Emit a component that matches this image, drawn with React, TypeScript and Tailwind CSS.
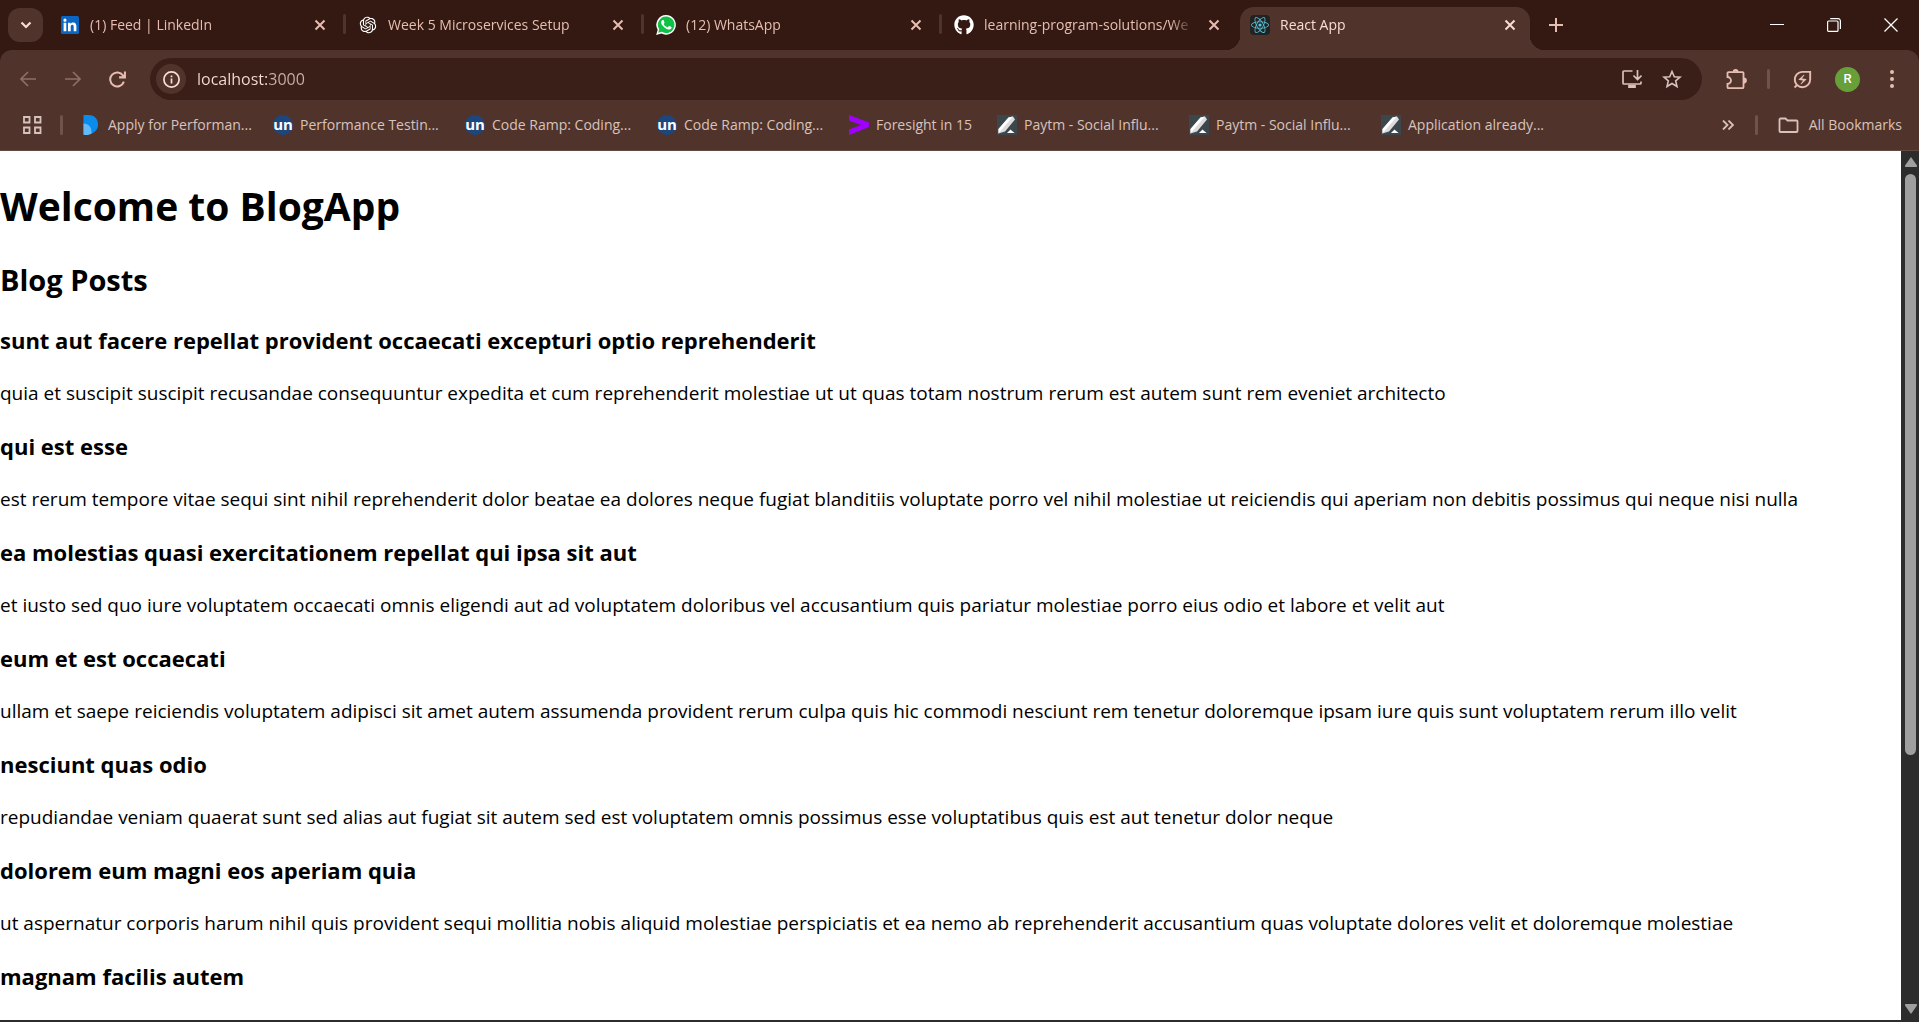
import type { ReactNode } from "react";
import { FaGithub, FaReact } from "react-icons/fa";
import { RiOpenaiFill } from "react-icons/ri";
import { MdOutlineEnergySavingsLeaf } from "react-icons/md";

const CHROME_FONT = "font-['Segoe_UI','Open_Sans',sans-serif]";

function CloseGlyph() {
  return (
    <svg viewBox="0 0 12 12" className="size-3" fill="none" stroke="currentColor" strokeWidth="2">
      <path d="M1.5 1.5l9 9M10.5 1.5l-9 9" />
    </svg>
  );
}

function LinkedInIcon() {
  return (
    <svg viewBox="0 0 18 18" className="size-[18px]">
      <rect width="18" height="18" rx="1.5" fill="#0a66c2" />
      <path
        fill="#fff"
        d="M2.6 6.8h2.7v8.5H2.6zM3.95 2.6a1.55 1.55 0 1 1 0 3.1 1.55 1.55 0 0 1 0-3.1zM7 6.8h2.5V8c.4-.8 1.3-1.5 2.6-1.5 2.7 0 3.3 1.7 3.3 4.1v4.7h-2.7v-4.2c0-1 0-2.3-1.4-2.3s-1.6 1.1-1.6 2.2v4.3H7z"
      />
    </svg>
  );
}

function WhatsAppIcon() {
  return (
    <svg viewBox="0 0 24 24" className="size-5">
      <path fill="#fff" d="M12.2 0A11.8 11.8 0 0 0 2 17.8L.2 24l6.4-1.7A11.8 11.8 0 1 0 12.2 0z" />
      <path fill="#0fc144" d="M12.2 1.9a9.9 9.9 0 0 0-8.4 15.2l-1.1 4.2 4.3-1.1A9.9 9.9 0 1 0 12.2 1.9z" />
      <path
        fill="#fff"
        d="M9.3 6.6c-.2-.5-.4-.5-.7-.5H8c-.2 0-.5.1-.8.4-.3.3-1 1-1 2.5s1.1 2.9 1.2 3.1c.2.2 2.1 3.4 5.2 4.6 2.6 1 3.1.8 3.7.8.6-.1 1.8-.7 2.1-1.5.3-.7.3-1.3.2-1.5-.1-.1-.3-.2-.6-.3l-2.100-1c-.3-.1-.5-.2-.7.2l-1 1.200c-.2.2-.4.2-.7.100-.3-.2-1.300-.5-2.500-1.500-.9-.8-1.500-1.800-1.700-2.100-.2-.3 0-.5.1-.6l.5-.6.3-.5v-.5z"
      />
    </svg>
  );
}

function ReactIcon() {
  return (
    <span className="flex size-5 items-center justify-center rounded-sm bg-[#222]">
      <FaReact className="size-[18px] text-[#58c4dc]" />
    </span>
  );
}

type TabInfo = { title: string; icon: ReactNode; active?: boolean; separator?: boolean };

const tabs: TabInfo[] = [
  { title: "(1) Feed | LinkedIn", icon: <LinkedInIcon />, separator: true },
  { title: "Week 5 Microservices Setup", icon: <RiOpenaiFill className="size-5 text-white" />, separator: true },
  { title: "(12) WhatsApp", icon: <WhatsAppIcon />, separator: true },
  { title: "learning-program-solutions/We", icon: <FaGithub className="size-5 text-white" /> },
  { title: "React App", icon: <ReactIcon />, active: true },
];

function Tab({ tab }: { tab: TabInfo }) {
  return (
    <div
      className={
        tab.active
          ? "relative flex h-[43px] min-w-0 max-w-[290px] flex-1 items-center self-end rounded-t-[14px] bg-[#50342c] pr-3.5 pb-[7px] pl-2.5 text-[#f8ddd5]"
          : "relative flex h-[43px] min-w-0 max-w-[298px] flex-1 items-center self-end pr-5 pb-[7px] pl-3 text-[#e7bdb1]"
      }
    >
      {tab.active && (
        <>
          <span className="absolute bottom-0 -left-3.5 size-3.5 bg-[radial-gradient(circle_at_0_0,transparent_14px,#50342c_14px)]" />
          <span className="absolute -right-3.5 bottom-0 size-3.5 bg-[radial-gradient(circle_at_100%_0,transparent_14px,#50342c_14px)]" />
        </>
      )}
      <span className="flex w-5 shrink-0 justify-center">{tab.icon}</span>
      <span className="ml-2.5 min-w-0 flex-1 overflow-hidden text-sm whitespace-nowrap [mask-image:linear-gradient(to_right,black_calc(100%-24px),transparent)]">
        {tab.title}
      </span>
      <button aria-label={`Close ${tab.title}`} className="ml-3.5 shrink-0">
        <CloseGlyph />
      </button>
      {tab.separator && <span className="absolute top-[7px] right-0 h-5 w-[3px] rounded-full bg-[#50342c]" />}
    </div>
  );
}

function TabStrip() {
  return (
    <div className="flex h-[50px] shrink-0 items-center bg-[#331912] text-[#e7bdb1]">
      <button
        aria-label="Search tabs"
        className="ml-2 flex h-[34px] w-[35px] shrink-0 items-center justify-center rounded-xl bg-[#50342c] text-[#f8ddd5]"
      >
        <svg viewBox="0 0 12 12" className="size-3" fill="none" stroke="currentColor" strokeWidth="2.2">
          <path d="M1.5 3.5L6 8l4.500-4.500" />
        </svg>
      </button>
      <div className="ml-[5px] flex min-w-0 flex-1 self-stretch">
        {tabs.map((tab) => (
          <Tab key={tab.title} tab={tab} />
        ))}
        <button aria-label="New tab" className="ml-[19px] shrink-0">
          <svg viewBox="0 0 14 14" className="size-3.5" fill="none" stroke="currentColor" strokeWidth="2">
            <path d="M7 0v14M0 7h14" />
          </svg>
        </button>
      </div>
      <div className="mr-[21px] flex shrink-0 items-center gap-[43px] text-white">
        <button aria-label="Minimize">
          <svg viewBox="0 0 14 14" className="size-3.5" stroke="currentColor">
            <path d="M0 6.500h14" />
          </svg>
        </button>
        <button aria-label="Restore">
          <svg viewBox="0 0 14 14" className="size-3.5" fill="none" stroke="currentColor" strokeWidth="1.200">
            <rect x=".6" y="3" width="10.400" height="10.400" rx="1" />
            <path d="M3.200 .7h8a2.200 2.200 0 0 1 2.200 2.200v8" />
          </svg>
        </button>
        <button aria-label="Close window">
          <svg viewBox="0 0 14 14" className="size-3.5" fill="none" stroke="currentColor" strokeWidth="1.300">
            <path d="M.5.5l13 13M13.500.5l-13 13" />
          </svg>
        </button>
      </div>
    </div>
  );
}

function Toolbar() {
  return (
    <div className="flex h-[58px] items-center text-[#e7bdb1]">
      <button aria-label="Back" className="ml-5 text-[#8e6d64]">
        <svg viewBox="0 0 16 16" className="size-4" fill="none" stroke="currentColor" strokeWidth="1.700">
          <path d="M16 8H1.500M8 1L1 8l7 7" />
        </svg>
      </button>
      <button aria-label="Forward" className="ml-[29px] text-[#8e6d64]">
        <svg viewBox="0 0 16 16" className="size-4" fill="none" stroke="currentColor" strokeWidth="1.700">
          <path d="M0 8h14.500M8 1l7 7-7 7" />
        </svg>
      </button>
      <button aria-label="Reload" className="ml-7">
        <svg viewBox="0 0 16 16" className="size-[17px]" fill="none" stroke="currentColor" strokeWidth="1.900">
          <path d="M14 10A6.600 6.600 0 1 1 13.200 4.200L14.800 6M15 .5V6H9.500" />
        </svg>
      </button>
      <div className="ml-6 flex h-[42px] min-w-0 flex-1 items-center rounded-full bg-[#3a1f19] pr-5 pl-1.5">
        <button
          aria-label="View site information"
          className="flex size-[30px] shrink-0 items-center justify-center rounded-full bg-[#50342c] text-[#f8ddd5]"
        >
          <svg viewBox="0 0 17 17" className="size-[17px]" fill="none" stroke="currentColor" strokeWidth="1.700">
            <circle cx="8.500" cy="8.500" r="7.600" />
            <path d="M8.500 7.500v5M8.500 4.400v1.800" />
          </svg>
        </button>
        <input
          aria-label="Address"
          defaultValue="localhost:3000"
          className="ml-[11px] min-w-0 flex-1 bg-transparent bg-linear-to-r from-[#f8ddd5] from-[71px] to-[#cdb0a8] to-[71px] bg-clip-text text-base text-transparent outline-none"
        />
        <button aria-label="Install app" className="text-[#d8c2bc]">
          <svg viewBox="0 0 20 18" className="h-[18px] w-5" fill="none" stroke="currentColor" strokeWidth="1.700">
            <path d="M10.500 1H2a1 1 0 0 0-1 1v11a1 1 0 0 0 1 1h16a1 1 0 0 0 1-1v-1.500M15.500 0v9M11.500 5.500l4 4 4-4" />
            <path d="M7 15.500v2h6v-2z" fill="currentColor" />
          </svg>
        </button>
        <button aria-label="Bookmark this tab" className="ml-5 text-[#d8c2bc]">
          <svg viewBox="0 0 20 20" className="size-5" fill="none" stroke="currentColor" strokeWidth="1.600">
            <path d="M10 2.500l2.300 5.200 5.700.5-4.300 3.700 1.300 5.600-5-3-5 3 1.300-5.600L2 8.200l5.700-.5z" />
          </svg>
        </button>
      </div>
      <button aria-label="Extensions" className="ml-6">
        <svg viewBox="0 0 21 21" className="size-[21px]" fill="none" stroke="currentColor" strokeWidth="1.800">
          <path d="M2.500 3.200h14a1 1 0 0 1 1 1v14a1 1 0 0 1-1 1h-14a1 1 0 0 1-1-1V15a3.400 3.400 0 0 0 0-7V4.200a1 1 0 0 1 1-1z" />
          <path d="M7.600 2.600a2 2 0 0 1 4 0zM18 9.500a2 2 0 0 1 0 4z" fill="currentColor" stroke="none" />
          <path d="M7.600 3a2 2 0 0 1 4 0M17.800 9.300a2.200 2.200 0 0 1 0 4.400" />
        </svg>
      </button>
      <span className="ml-5 h-5 w-[3px] rounded-full bg-[#72534a]" />
      <button aria-label="Energy saver" className="ml-[21px]">
        <MdOutlineEnergySavingsLeaf className="size-[23px]" />
      </button>
      <button
        aria-label="Profile"
        className="ml-[21px] flex size-[25px] items-center justify-center rounded-full bg-[#689f38] font-[Roboto,sans-serif] text-[13px] font-medium text-white"
      >
        R
      </button>
      <button aria-label="Menu" className="mr-[25px] ml-[30px]">
        <svg viewBox="0 0 4 18" className="h-[18px] w-1" fill="currentColor">
          <circle cx="2" cy="2" r="2" />
          <circle cx="2" cy="9" r="2" />
          <circle cx="2" cy="16" r="2" />
        </svg>
      </button>
    </div>
  );
}

function DropIcon() {
  return (
    <svg viewBox="0 0 20 20" className="size-5">
      <path d="M2.500 0h5C13.500 0 17 4 17 9.500c0 4-2.500 7.500-6 9L2.500 20z" fill="#0a8cec" />
      <path d="M2.500 8.500c5 0 8.500 4 8 10.200L7 20H3.500a1 1 0 0 1-1-1z" fill="#63baf8" />
    </svg>
  );
}

function UnIcon() {
  return (
    <span className="flex size-5 items-center justify-center rounded-full bg-[#1c4680] pb-0.5 text-[15px] leading-none font-bold text-white">
      un
    </span>
  );
}

function ChevronLogo() {
  return (
    <svg viewBox="0 0 20 20" className="size-5" fill="#a100ff">
      <path d="M0 0l20 7.500v4.500L0 20v-5.500L12 10 0 5.500z" />
    </svg>
  );
}

function PenIcon() {
  return (
    <svg viewBox="0 0 20 20" className="size-5">
      <rect width="20" height="20" fill="#3c474c" />
      <path d="M11.500 2.500L16 1.500l2 3L8 16.500l-6.500 2V14z" fill="#dcdcdc" />
      <path d="M11.500 2.500L16 1.500 4 15.500l-2.500 3V14z" fill="#fff" />
      <path d="M10 18l3.500-3.500L17.500 18z" fill="#fff" />
    </svg>
  );
}

const bookmarks: { title: string; icon: ReactNode; short?: boolean }[] = [
  { title: "Apply for Performan...", icon: <DropIcon /> },
  { title: "Performance Testin...", icon: <UnIcon /> },
  { title: "Code Ramp: Coding...", icon: <UnIcon /> },
  { title: "Code Ramp: Coding...", icon: <UnIcon /> },
  { title: "Foresight in 15", icon: <ChevronLogo />, short: true },
  { title: "Paytm - Social Influ...", icon: <PenIcon /> },
  { title: "Paytm - Social Influ...", icon: <PenIcon /> },
  { title: "Application already...", icon: <PenIcon /> },
];

function BookmarksBar() {
  return (
    <nav className="flex h-[42px] items-start pt-[7px] text-sm leading-5 text-[#d8c2bc]">
      <button aria-label="Apps" className="ml-[23px] shrink-0 pt-px">
        <svg viewBox="0 0 19 18" className="h-[18px] w-[19px]" fill="none" stroke="currentColor" strokeWidth="1.800">
          <path d="M1 1h5.500v5.500H1zM12 1h5.500v5.500H12zM1 11.500h5.500V17H1zM12 11.500h5.500V17H12z" />
        </svg>
      </button>
      <span className="ml-[18px] h-5 w-[3px] shrink-0 rounded-full bg-[#72534a]" />
      <div className="ml-[18px] flex min-w-0 flex-1 overflow-hidden">
        {bookmarks.map((b, i) => (
          <a
            key={i}
            href="#"
            className={
              b.short
                ? "flex w-[148px] shrink-0 gap-[7px] whitespace-nowrap"
                : "flex w-48 shrink-0 gap-[7px] whitespace-nowrap"
            }
          >
            <span className="shrink-0">{b.icon}</span>
            {b.title}
          </a>
        ))}
      </div>
      <button aria-label="More bookmarks" className="shrink-0 pt-[5px]">
        <svg viewBox="0 0 12 10" className="h-2.5 w-3" fill="none" stroke="currentColor" strokeWidth="1.800">
          <path d="M1 .5L5.500 5 1 9.500M6.500.5L11 5l-4.500 4.500" />
        </svg>
      </button>
      <span className="ml-[21px] h-5 w-[3px] shrink-0 rounded-full bg-[#72534a]" />
      <a href="#" className="mr-[17px] ml-5 flex shrink-0 gap-2.5 whitespace-nowrap">
        <svg viewBox="0 0 21 16" className="mt-0.5 h-4 w-[21px]" fill="none" stroke="currentColor" strokeWidth="1.800">
          <path d="M2.500 1.500h5l2 2h9a1 1 0 0 1 1 1V14a1 1 0 0 1-1 1h-16a1 1 0 0 1-1-1V2.500a1 1 0 0 1 1-1z" />
        </svg>
        All Bookmarks
      </a>
    </nav>
  );
}

const posts = [
  {
    title: "sunt aut facere repellat provident occaecati excepturi optio reprehenderit",
    body: "quia et suscipit suscipit recusandae consequuntur expedita et cum reprehenderit molestiae ut ut quas totam nostrum rerum est autem sunt rem eveniet architecto",
  },
  {
    title: "qui est esse",
    body: "est rerum tempore vitae sequi sint nihil reprehenderit dolor beatae ea dolores neque fugiat blanditiis voluptate porro vel nihil molestiae ut reiciendis qui aperiam non debitis possimus qui neque nisi nulla",
  },
  {
    title: "ea molestias quasi exercitationem repellat qui ipsa sit aut",
    body: "et iusto sed quo iure voluptatem occaecati omnis eligendi aut ad voluptatem doloribus vel accusantium quis pariatur molestiae porro eius odio et labore et velit aut",
  },
  {
    title: "eum et est occaecati",
    body: "ullam et saepe reiciendis voluptatem adipisci sit amet autem assumenda provident rerum culpa quis hic commodi nesciunt rem tenetur doloremque ipsam iure quis sunt voluptatem rerum illo velit",
  },
  {
    title: "nesciunt quas odio",
    body: "repudiandae veniam quaerat sunt sed alias aut fugiat sit autem sed est voluptatem omnis possimus esse voluptatibus quis est aut tenetur dolor neque",
  },
  {
    title: "dolorem eum magni eos aperiam quia",
    body: "ut aspernatur corporis harum nihil quis provident sequi mollitia nobis aliquid molestiae perspiciatis et ea nemo ab reprehenderit accusantium quas voluptate dolores velit et doloremque molestiae",
  },
  { title: "magnam facilis autem", body: "" },
];

function BlogPage() {
  return (
    <main className="min-w-0 flex-1 overflow-hidden bg-white text-black">
      <h1 className="mt-7 text-[39px] leading-[54px] font-bold">Welcome to BlogApp</h1>
      <h2 className="mt-[27px] text-[29px] leading-10 font-bold">Blog Posts</h2>
      {posts.map((post) => (
        <article key={post.title}>
          <h3 className="mt-6 text-[22px] leading-8 font-bold">{post.title}</h3>
          {post.body && <p className="mt-6 text-[19px] leading-[26px]">{post.body}</p>}
        </article>
      ))}
    </main>
  );
}

function Scrollbar() {
  return (
    <div className="flex w-[18px] shrink-0 flex-col items-center bg-[#2c2c2c] pt-1.5 pb-1.5 pl-px text-[#9f9f9f]">
      <svg viewBox="0 0 12 10" className="h-2.5 w-3 shrink-0" fill="currentColor">
        <path d="M6 0l6 8.500a1 1 0 0 1-1 1.500H1a1 1 0 0 1-1-1.500z" />
      </svg>
      <div className="mt-[7px] flex min-h-0 flex-1 flex-col">
        <div className="h-[70%] w-[11px] rounded-full bg-[#9f9f9f]" />
      </div>
      <svg viewBox="0 0 12 10" className="h-2.5 w-3 shrink-0" fill="currentColor">
        <path d="M6 10L0 1.500A1 1 0 0 1 1 0h10a1 1 0 0 1 1 1.500z" />
      </svg>
    </div>
  );
}

export default function App() {
  return (
    <div className={`flex h-screen flex-col overflow-hidden bg-[#331912] ${CHROME_FONT}`}>
      <TabStrip />
      <header className="shrink-0 rounded-t-xl border-b border-[#634a43] bg-[#50342c]">
        <Toolbar />
        <BookmarksBar />
      </header>
      <div className="flex min-h-0 flex-1 border-b-2 border-[#2c2c2c]">
        <BlogPage />
        <Scrollbar />
      </div>
    </div>
  );
}
